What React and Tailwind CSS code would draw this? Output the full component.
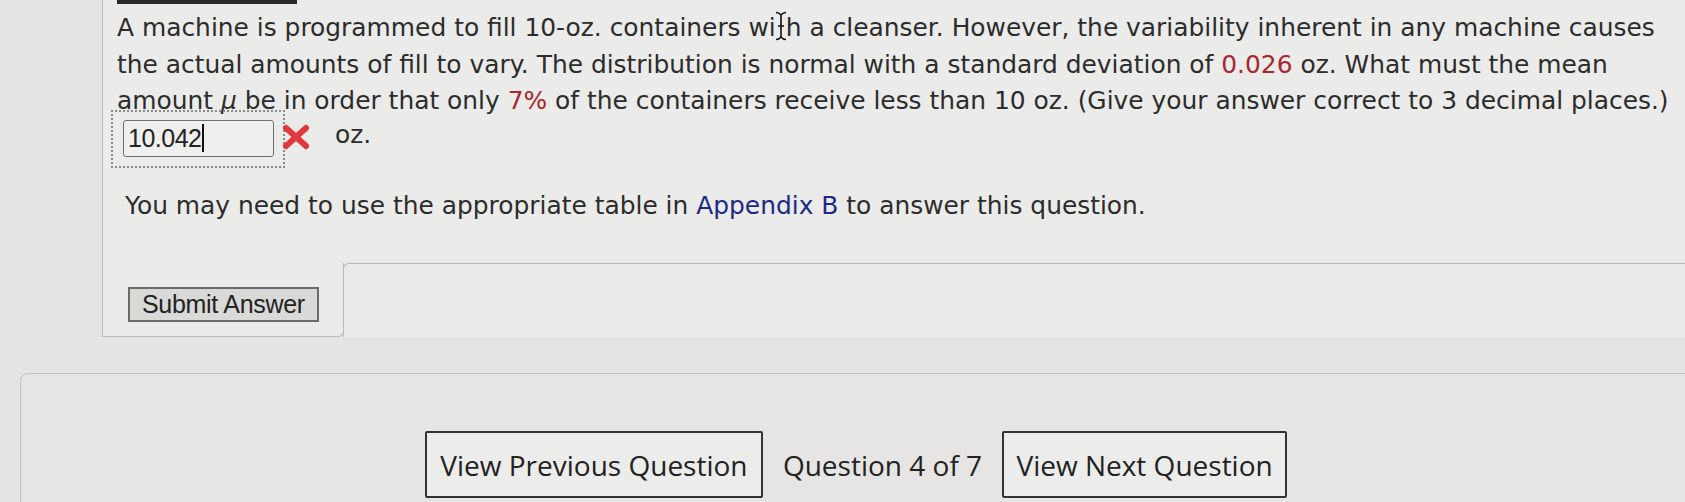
import React from 'react';

const body = { fontFamily: '"DejaVu Sans", Verdana, sans-serif' };
const arial = { fontFamily: '"Liberation Sans", Arial, sans-serif' };
const open = { fontFamily: '"Open Sans", "Noto Sans", sans-serif' };

function IBeam() {
  return (
    <span className="relative inline-block w-[10px] align-baseline">
      &nbsp;
      <svg className="absolute left-[-1px] top-[1px]" width="12" height="30" viewBox="0 0 12 30">
        <path d="M1 1.5 Q4 1.5 6 4 Q8 1.5 11 1.5 M6 4 V26 M1 28.5 Q4 28.5 6 26 Q8 28.5 11 28.5 M3 15 H9" stroke="#111" strokeWidth="1.6" fill="none" />
      </svg>
    </span>
  );
}

function RedX() {
  return (
    <svg width="30" height="28" viewBox="0 0 30 28">
      <path d="M5 5 L25 23 M25 5 L5 23" stroke="#e0383c" strokeWidth="6" strokeLinecap="round" />
    </svg>
  );
}

export default function App() {
  return (
    <div className="w-[1685px] h-[502px] overflow-hidden bg-[#e4e4e2] flex flex-col">
      {/* question panel */}
      <div className="ml-[102px] border-l border-[#b9b9b7] bg-[#ebebe9] flex flex-col">
        <div className="ml-[14px] w-[180px] h-[4px] bg-[#2a2a2a]" />
        <div className="pl-[14px] pt-[6px] text-[24.9px] leading-[36.5px] text-[#2c2c2c] whitespace-nowrap" style={body}>
          <div>
            A machine is programmed to fill 10-oz. containers wi<IBeam />h a cleanser. However, the variability inherent in any machine causes
          </div>
          <div>
            the actual amounts of fill to vary. The distribution is normal with a standard deviation of{' '}
            <span className="text-[#a8262e]">0.026</span> oz. What must the mean
          </div>
          <div>
            amount <i>μ</i> be in order that only <span className="text-[#a8262e]">7%</span> of the containers receive less than 10 oz. (Give your answer correct to 3 decimal places.)
          </div>

          <div className="flex items-center mt-[-10px]">
            <div className="ml-[-6px] w-[174px] h-[58px] border-2 border-dotted border-[#8a8a8a] pl-[10px] pt-[8px]">
              <div className="w-[151px] h-[37px] border border-[#707070] rounded-[3px] bg-[#efefed] flex items-center pl-[4px] text-[25px] leading-none text-[#222] tracking-[-0.5px]" style={arial}>
                10.042<span className="w-[1.5px] h-[28px] bg-[#111] ml-[1px]" />
              </div>
            </div>
            <div className="ml-[-4px] mt-[-4px]">
              <RedX />
            </div>
            <span className="ml-[24px] mt-[-6px]">oz.</span>
          </div>

          <div className="pl-[8px] mt-[20px]">
            You may need to use the appropriate table in <span className="text-[#1c2a85]">Appendix B</span> to answer this question.
          </div>
        </div>

        <div className="flex mt-[39px]">
          <div className="w-[242px] h-[74px] border-r border-b border-l border-[#b9b9b7] rounded-br-[6px] ml-[-1px] pl-[25px] pt-[24px]">
            <button className="h-[35px] px-[12px] border-2 border-[#6a6a6a] bg-[#d9d9d7] text-[25px] leading-none text-[#222] tracking-[-0.3px]" style={arial}>
              Submit Answer
            </button>
          </div>
          <div className="flex-1 border-t border-l border-[#b9b9b7] rounded-tl-[6px] ml-[-1px]" />
        </div>
      </div>

      {/* navigation panel */}
      <div className="ml-[20px] mt-[36px] flex-1 border-t border-l border-[#c2c2c0] rounded-tl-[8px] bg-[#e6e5e3] flex justify-center pt-[53px] pl-[6px]" style={open}>
        <div className="flex items-center text-[28px] text-[#222]">
          <button className="w-[338px] h-[67px] border-2 border-[#333] rounded-[2px] bg-[#ececea]">View Previous Question</button>
          <span className="px-[20px]">Question 4 of 7</span>
          <button className="w-[285px] h-[67px] border-2 border-[#333] rounded-[2px] bg-[#ececea]">View Next Question</button>
        </div>
      </div>
    </div>
  );
}
